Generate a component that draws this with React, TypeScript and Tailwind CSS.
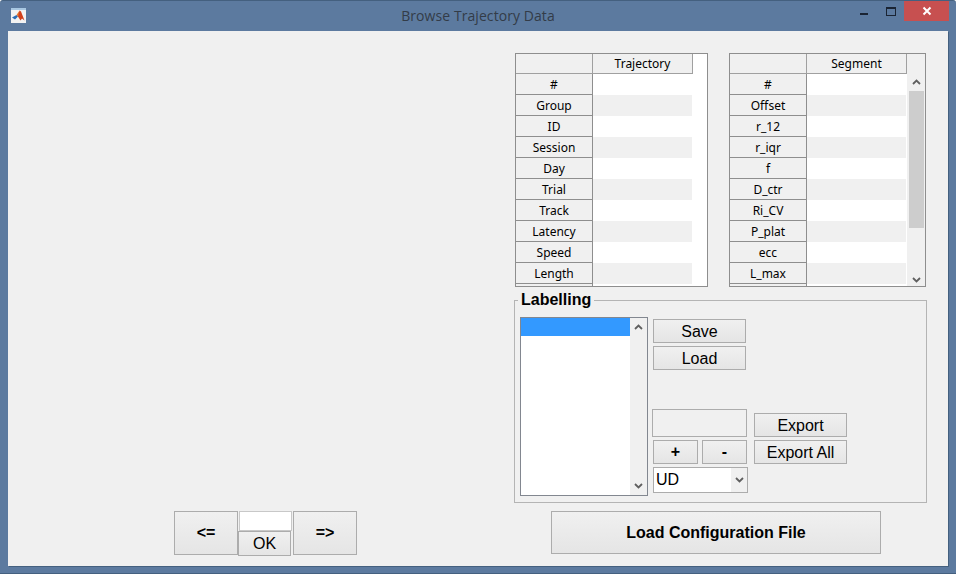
import type { ReactNode } from "react";

const TRAJECTORY_ROWS = ["#", "Group", "ID", "Session", "Day", "Trial", "Track", "Latency", "Speed", "Length", ""];
const SEGMENT_ROWS = ["#", "Offset", "r_12", "r_iqr", "f", "D_ctr", "Ri_CV", "P_plat", "ecc", "L_max", ""];

function Chevron({ up = false }: { up?: boolean }) {
  return (
    <svg width="9" height="6" viewBox="0 0 9 6" className="block">
      <path d={up ? "M1 5 L4.5 1.5 L8 5" : "M1 1 L4.5 4.5 L8 1"} fill="none" stroke="#5f5f5f" strokeWidth="1.8" />
    </svg>
  );
}

function MatlabIcon() {
  return (
    <svg width="15" height="15" viewBox="0 0 15 15" className="block">
      <rect x="0" y="0" width="15" height="15" fill="#f2f2f2" />
      <rect x="0" y="0" width="15" height="2" fill="#a9c8e2" />
      <path d="M1 9.5 L5.5 7 L7 8.5 L4 11.5 Z" fill="#2a6db5" />
      <path d="M5.5 7 L8.5 2.5 L7.5 9.5 L7 8.5 Z" fill="#e8792a" />
      <path d="M8.5 2.5 L10 3.5 L13.5 12.5 L11 10.5 L9.5 12.5 L7 8.5 Z" fill="#d2401c" />
    </svg>
  );
}

function Btn({ className, children }: { className: string; children?: ReactNode }) {
  return (
    <button className={"flex items-center justify-center shrink-0 border border-[#acacac] bg-linear-to-b from-[#f0f0f0] to-[#e5e5e5] text-black text-[16px] leading-none font-['Liberation_Sans',sans-serif] " + className}>
      {children}
    </button>
  );
}

function PropTable({ title, rows, wide }: { title: string; rows: string[]; wide?: boolean }) {
  return (
    <div className={"relative h-[234px] border border-[#8e8e8e] overflow-hidden bg-white font-['Noto_Sans',sans-serif] text-[12px] leading-none text-black " + (wide ? "w-[197px]" : "w-[193px]")}>
      <div className="flex h-[20px]">
        <div className="w-[77px] bg-[#f0f0f0] border-r border-b border-[#a0a0a0]" />
        <div className="w-[100px] pt-[1px] bg-[#f0f0f0] border-r border-b border-[#a0a0a0] flex items-center justify-center">{title}</div>
      </div>
      {rows.map((label, i) => (
        <div key={i} className="flex h-[21px]">
          <div className="w-[77px] pt-[1px] bg-[#f0f0f0] border-r border-b border-[#8e8e8e] flex items-center justify-center">{label}</div>
          <div className={"w-[99px] " + (i % 2 === 0 ? "bg-white" : "bg-[#f0f0f0]")} />
        </div>
      ))}
      {wide && (
        <div className="absolute right-0 top-0 bottom-0 w-[18px] bg-[#f0f0f0] flex flex-col items-center">
          <div className="h-[37px] flex items-end pb-[6px]">
            <Chevron up />
          </div>
          <div className="w-[15px] h-[137px] bg-[#cdcdcd]" />
          <div className="mt-auto mb-[3px]">
            <Chevron />
          </div>
        </div>
      )}
    </div>
  );
}

export default function App() {
  return (
    <div className="w-[956px] h-[574px] flex flex-col bg-[#5c7a9f] border-t border-b border-[#44607f] rounded-t-[3px]">
      {/* title bar */}
      <div className="grid grid-cols-[1fr_auto_1fr] h-[30px] shrink-0">
        <div className="pl-[11px] pt-[7px]">
          <MatlabIcon />
        </div>
        <div className="flex items-center pb-[1px] text-[14px] tracking-[0.07px] text-[#333c48] font-['Open_Sans',sans-serif]">Browse Trajectory Data</div>
        <div className="flex justify-end items-start pr-[7px]">
          <div className="w-[8px] h-[2px] mt-[12px] bg-[#1a2433]" />
          <div className="w-[10px] h-[9px] mt-[6px] ml-[18px] border border-t-2 border-[#1a2433]" />
          <div className="w-[45px] h-[20px] ml-[8px] bg-[#c75050] flex items-center justify-center">
            <svg width="10" height="10" viewBox="0 0 10 10">
              <path d="M1.5 1.5 L8.5 8.5 M8.5 1.5 L1.5 8.5" stroke="#fff" strokeWidth="2" />
            </svg>
          </div>
        </div>
      </div>

      {/* client area */}
      <div className="mx-[8px] w-[940px] h-[535px] flex bg-[#f0f0f0] shadow-[1px_1px_0_#44607f]">
        <div className="w-[506px] shrink-0 flex flex-col justify-end pb-[10px] pl-[166px]">
          <div className="flex items-start">
            <Btn className="w-[64px] h-[44px] font-bold">&lt;=</Btn>
            <div className="w-[54px]">
              <div className="ml-[1px] w-[53px] h-[20px] bg-white border border-[#c8c8c8]" />
              <Btn className="w-[53px] h-[25px]">OK</Btn>
            </div>
            <Btn className="ml-[1px] w-[64px] h-[44px] font-bold">=&gt;</Btn>
          </div>
        </div>

        <div className="pt-[22px] flex flex-col items-start">
          <div className="flex gap-[21px] ml-[1px]">
            <PropTable title="Trajectory" rows={TRAJECTORY_ROWS} />
            <PropTable title="Segment" rows={SEGMENT_ROWS} wide />
          </div>

          {/* labelling panel */}
          <div className="relative mt-[13px] w-[413px] h-[203px] border border-[#b4b4b4] pl-[5px] pt-[16px] flex items-start">
            <div className="absolute left-[3px] -top-[10px] px-[3px] bg-[#f0f0f0] text-[16px] leading-[18px] font-bold text-black font-['Liberation_Sans',sans-serif]">Labelling</div>

            <div className="w-[128px] h-[179px] border border-[#828790] bg-white flex shrink-0">
              <div className="w-[109px]">
                <div className="h-[18px] bg-[#3399ff]" />
              </div>
              <div className="flex-1 bg-[#f0f0f0] flex flex-col items-center justify-between py-[6px]">
                <Chevron up />
                <Chevron />
              </div>
            </div>

            <div className="ml-[4px] w-[96px] h-[176px] shrink-0 flex flex-col">
              <Btn className="ml-[1px] mt-[2px] pt-[2px] w-[93px] h-[24px]">Save</Btn>
              <Btn className="ml-[1px] mt-[3px] pt-[2px] w-[93px] h-[24px]">Load</Btn>
              <div className="mt-[39px] w-[95px] h-[28px] border border-[#acacac]" />
              <div className="mt-[3px] ml-[1px] flex gap-[4px]">
                <Btn className="w-[45px] h-[24px] font-bold">+</Btn>
                <Btn className="w-[45px] h-[24px] font-bold">-</Btn>
              </div>
              <div className="mt-[3px] ml-[1px] w-[95px] h-[26px] border border-[#acacac] bg-white flex text-[16px] text-black font-['Liberation_Sans',sans-serif]">
                <div className="flex-1 pl-[2px] flex items-center">UD</div>
                <div className="w-[16px] bg-[#f0f0f0] flex items-center justify-center">
                  <Chevron />
                </div>
              </div>
            </div>

            <div className="ml-[6px] mt-[96px] flex flex-col gap-[3px]">
              <Btn className="pt-[2px] w-[93px] h-[24px]">Export</Btn>
              <Btn className="pt-[2px] w-[93px] h-[24px]">Export All</Btn>
            </div>
          </div>

          <Btn className="mt-[8px] ml-[37px] w-[330px] h-[43px] font-bold">Load Configuration File</Btn>
        </div>
      </div>
    </div>
  );
}
